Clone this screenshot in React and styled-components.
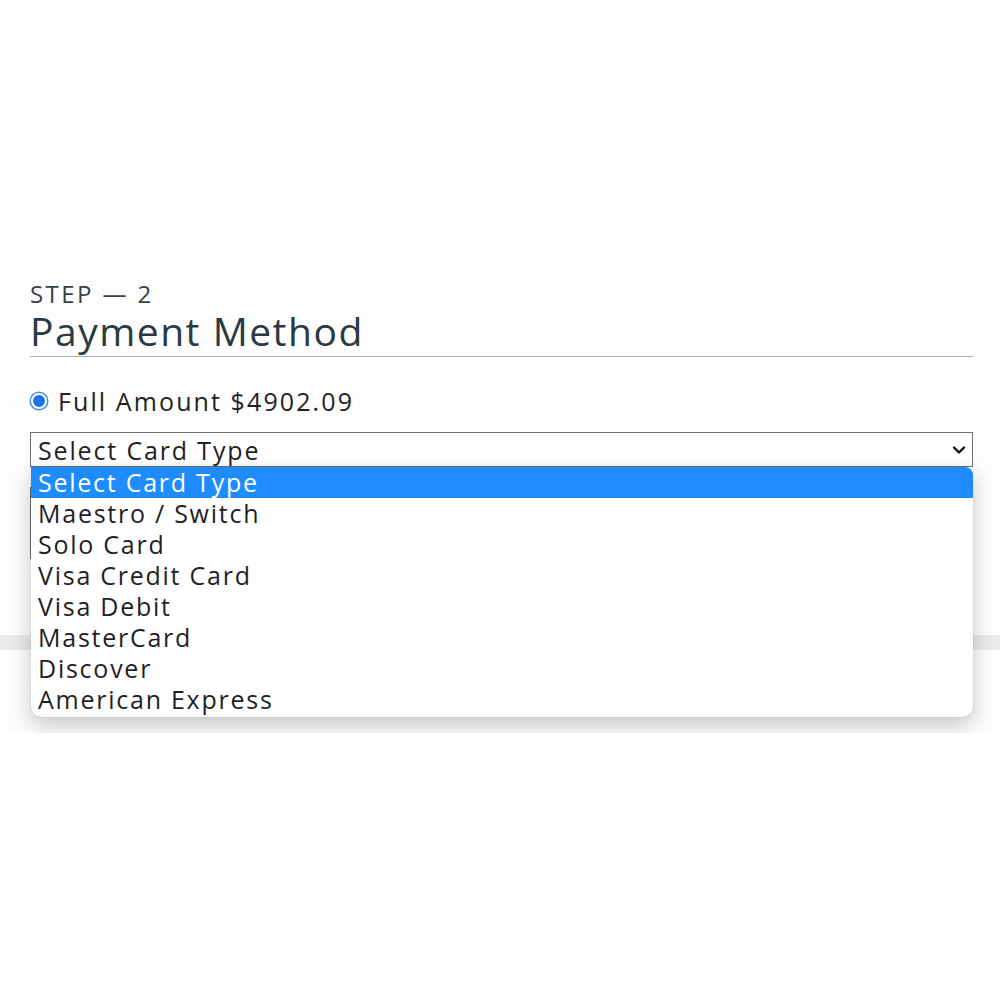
import React from "react";
import styled, { createGlobalStyle } from "styled-components";

const Global = createGlobalStyle`
  html, body { margin: 0; padding: 0; background: #ffffff; }
  body { font-family: "Open Sans", "Liberation Sans", sans-serif; }
`;

const Frame = styled.section`
  margin-top: 265px;
  height: 468px;
  overflow: hidden;
  position: relative;
  background: #fdfdfd;
`;

const Form = styled.div`
  padding: 16px 27px 0 30px;
  position: relative;
`;

const StepLabel = styled.div`
  font-size: 24px;
  line-height: 26px;
  color: #3a3f45;
  letter-spacing: 2.4px;
`;

const Title = styled.h2`
  margin: 4px 0 0;
  font-size: 39px;
  font-weight: 400;
  line-height: 40px;
  color: #2b3a42;
  letter-spacing: 1.5px;
  padding-bottom: 5px;
  border-bottom: 1px solid #aeaeae;
`;

const RadioRow = styled.label`
  display: flex;
  align-items: center;
  gap: 11px;
  margin-top: 27px;
  font-size: 25px;
  line-height: 34px;
  color: #1f1f1f;
  letter-spacing: 2.1px;
`;

const RadioDot = styled.span`
  width: 12px;
  height: 12px;
  border-radius: 50%;
  background: #1a73e8;
  border: 2px solid #fff;
  box-shadow: 0 0 0 1.5px #4a90d9;
  margin-left: 1px;
  flex: none;
`;

const SelectWrap = styled.div`
  position: relative;
  margin-top: 14px;
`;

const SelectBox = styled.div`
  height: 33px;
  border: 1px solid #6f6f6f;
  background: #fff;
  display: flex;
  align-items: center;
  justify-content: space-between;
  padding: 0 6px 0 7px;
  font-size: 25px;
  color: #1f1f1f;
  letter-spacing: 1.85px;
`;

const Behind = styled.div`
  margin-top: 20px;
  height: 70px;
  border: 1px solid #6f6f6f;
  background: #fff;
`;

const Band = styled.div`
  margin: 76px -27px 0 -30px;
  height: 15px;
  background: #ebebeb;
`;

const List = styled.ul`
  position: absolute;
  left: 1px;
  right: 0;
  top: 35px;
  margin: 0;
  padding: 0 0 2px;
  list-style: none;
  background: #fff;
  border-radius: 0 0 10px 10px;
  box-shadow: 0 8px 22px rgba(0, 0, 0, 0.22), 0 0 1px rgba(0, 0, 0, 0.35);
  z-index: 2;
`;

const Item = styled.li`
  height: 31px;
  line-height: 31px;
  padding-left: 7px;
  font-size: 25px;
  letter-spacing: 1.75px;
  color: ${(p) => (p.$active ? "#ffffff" : "#1f1f1f")};
  background: ${(p) => (p.$active ? "#1e8cff" : "transparent")};
  border-radius: ${(p) => (p.$active ? "0 8px 0 0" : "0")};
`;

const options = [
  "Select Card Type",
  "Maestro / Switch",
  "Solo Card",
  "Visa Credit Card",
  "Visa Debit",
  "MasterCard",
  "Discover",
  "American Express",
];

const Chevron = () => (
  <svg width="14" height="10" viewBox="0 0 14 10">
    <path d="M2 2.5 L7 7.5 L12 2.5" fill="none" stroke="#111" strokeWidth="2.4" strokeLinecap="round" strokeLinejoin="round" />
  </svg>
);

export default function App() {
  return (
    <>
      <Global />
      <Frame>
        <Form>
          <StepLabel>STEP — 2</StepLabel>
          <Title>Payment Method</Title>
          <RadioRow>
            <RadioDot />
            Full Amount $4902.09
          </RadioRow>
          <SelectWrap>
            <SelectBox>
              <span>Select Card Type</span>
              <Chevron />
            </SelectBox>
            <List>
              {options.map((o, i) => (
                <Item key={o} $active={i === 0}>{o}</Item>
              ))}
            </List>
            <Behind />
          </SelectWrap>
          <Band />
        </Form>
      </Frame>
    </>
  );
}
